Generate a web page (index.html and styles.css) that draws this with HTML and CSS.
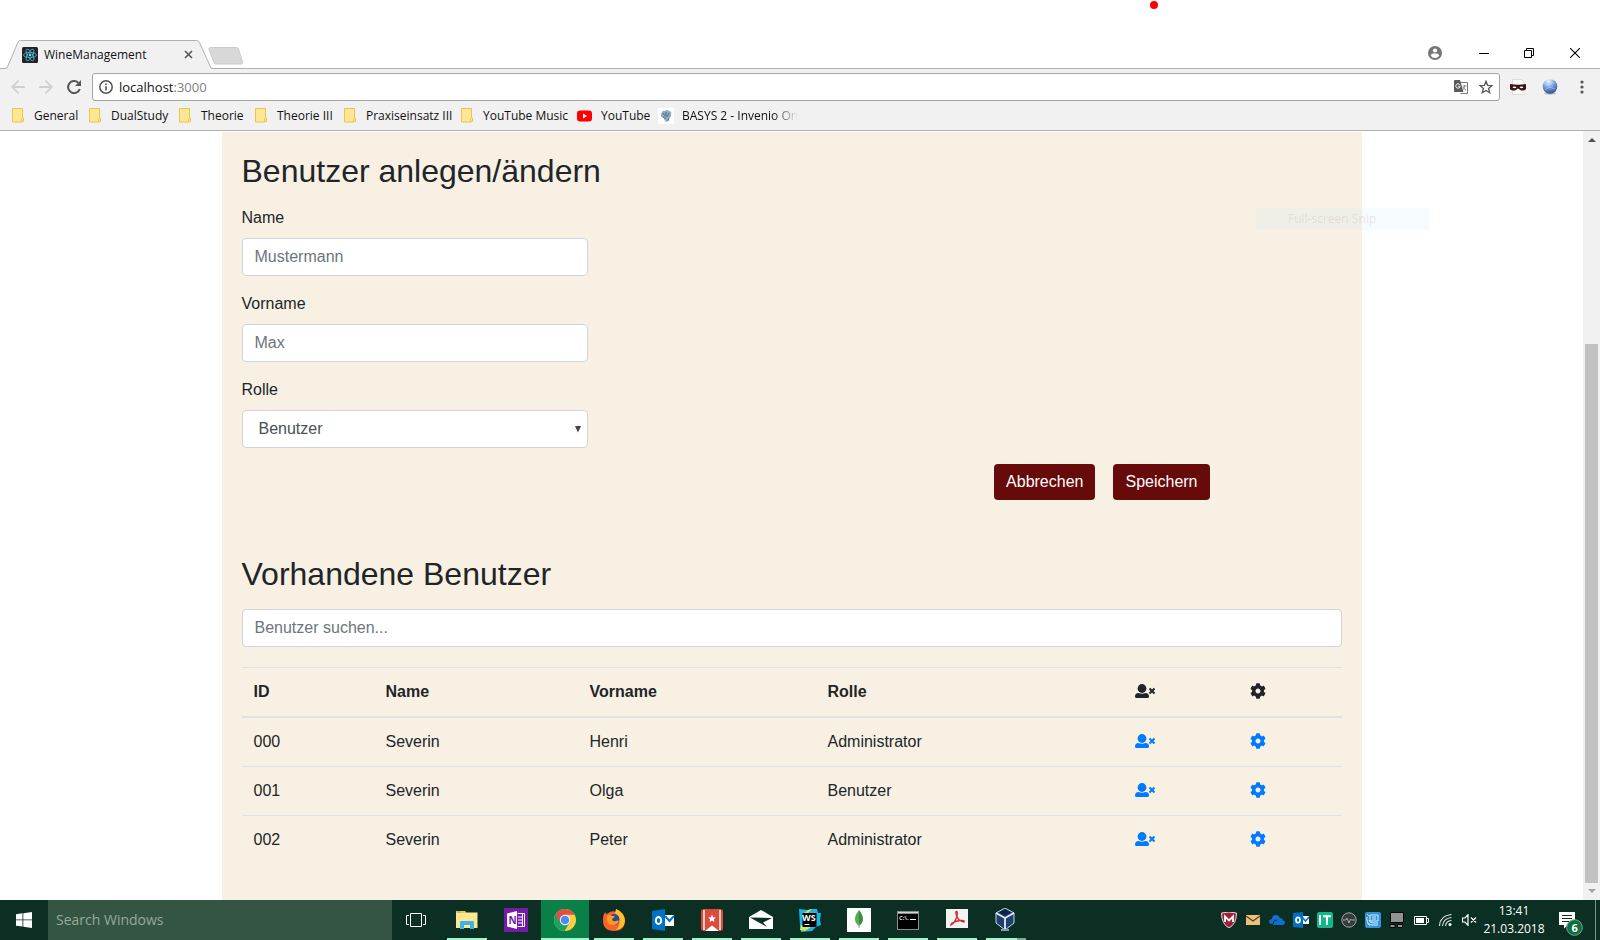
FILE: index.html
```html
<!DOCTYPE html>
<html lang="de">
<head>
<meta charset="utf-8">
<title>WineManagement</title>
<link rel="stylesheet" href="styles.css">
</head>
<body>
<svg class="defs" aria-hidden="true">
  <symbol id="folder" viewBox="0 0 13 15"><path d="M.5.5h10v9.500h1v3.500h-1v.5H.5z" fill="#ffe694" stroke="#eac54b"/><path d="M9.500 10.500v3" stroke="#eac54b"/></symbol>
  <symbol id="user-x" viewBox="0 0 20 14"><circle cx="7" cy="4.500" r="4.400" fill="currentColor"/><path d="M0 12.500Q0 9 3.500 9q3.500 1.500 7 0Q14 9 14 12.500q0 1.500-1.500 1.500h-11Q0 14 0 12.500z" fill="currentColor"/><path d="m14.500 4.500 5 5m0-5-5 5" stroke="currentColor" stroke-width="2"/></symbol>
  <symbol id="cog" viewBox="0 0 512 512"><path fill="currentColor" d="M444.788 291.1l42.616 24.599c4.867 2.809 7.126 8.618 5.459 13.985-11.07 35.642-29.97 67.842-54.689 94.586a12.016 12.016 0 0 1-14.832 2.254l-42.584-24.595a191.577 191.577 0 0 1-60.759 35.13v49.182a12.01 12.01 0 0 1-9.377 11.718c-34.956 7.85-72.499 8.256-109.219.007-5.49-1.233-9.403-6.096-9.403-11.723v-49.184a191.555 191.555 0 0 1-60.759-35.13l-42.584 24.595a12.016 12.016 0 0 1-14.832-2.254c-24.718-26.744-43.619-58.944-54.689-94.586-1.667-5.366.592-11.175 5.459-13.985L67.212 291.1a193.48 193.48 0 0 1 0-70.199l-42.616-24.599c-4.867-2.809-7.126-8.618-5.459-13.985 11.07-35.642 29.97-67.842 54.689-94.586a12.016 12.016 0 0 1 14.832-2.254l42.584 24.595a191.577 191.577 0 0 1 60.759-35.13V25.759a12.01 12.01 0 0 1 9.377-11.718c34.956-7.85 72.499-8.256 109.219-.007 5.49 1.233 9.403 6.096 9.403 11.723v49.184a191.555 191.555 0 0 1 60.759 35.13l42.584-24.595a12.016 12.016 0 0 1 14.832 2.254c24.718 26.744 43.619 58.944 54.689 94.586 1.667 5.366-.592 11.175-5.459 13.985L444.788 220.9a193.485 193.485 0 0 1 0 70.2zM336 256c0-44.112-35.888-80-80-80s-80 35.888-80 80 35.888 80 80 80 80-35.888 80-80z"/></symbol>
</svg>

<header class="browser">
  <div class="tabstrip">
    <div class="tab">
      <svg class="tab-shape" viewBox="0 0 208 29" width="208" height="29"><path d="M0 29 2 28 13 2Q14 .5 15.500.5h176q2 0 3 2L206 28l2 1z" fill="#f1f1f1"/><path d="M0 28.500 2 28 13 2Q14 .5 15.500.5h176q2 0 3 2L206 28l2 .5" fill="none" stroke="#b0b0b0"/></svg>
      <svg class="favicon" viewBox="0 0 16 16" width="16" height="16"><rect width="16" height="16" rx="1.500" fill="#222"/><g fill="none" stroke="#4db8d6" stroke-width=".8"><ellipse cx="8" cy="8" rx="6.500" ry="2.600"/><ellipse cx="8" cy="8" rx="6.500" ry="2.600" transform="rotate(60 8 8)"/><ellipse cx="8" cy="8" rx="6.500" ry="2.600" transform="rotate(120 8 8)"/></g><circle cx="8" cy="8" r="1.400" fill="#61dafb"/></svg>
      <span class="tab-title">WineManagement</span>
      <button class="plain" aria-label="Tab schließen"><svg viewBox="0 0 9 9" width="9" height="9"><path d="m1 1 7 7m0-7L1 8" stroke="#555" stroke-width="1.600"/></svg></button>
    </div>
    <button class="plain new-tab" aria-label="Neuer Tab"><svg viewBox="0 0 35 18" width="35" height="18"><path d="M2.500.5h26q1.500 0 2 1.500l4 13q.5 2-1 2H8q-1.500 0-2-1.500L1 2.500Q.5.500 2.500.5z" fill="#d8d8d8" stroke="#cacaca"/></svg></button>
    <div class="window-buttons">
      <button class="plain" aria-label="Profil"><svg viewBox="0 0 14 14" width="14" height="14"><circle cx="7" cy="7" r="7" fill="#757575"/><circle cx="7" cy="4.500" r="2.100" fill="#fff"/><path d="M2.800 9.700C3 7.500 5 7.500 7 7.500s4 0 4.200 2.200Q9.700 12 7 12T2.800 9.700z" fill="#fff"/></svg></button>
      <button class="plain" aria-label="Minimieren"><svg viewBox="0 0 10 10" width="10" height="10"><path d="M0 5.500h10" stroke="#000"/></svg></button>
      <button class="plain" aria-label="Verkleinern"><svg viewBox="0 0 10 10" width="10" height="10"><path d="M.5 2.500h7v7h-7zM2.500 2V.5h7v7H8" fill="none" stroke="#000"/></svg></button>
      <button class="plain" aria-label="Schließen"><svg viewBox="0 0 10 10" width="10" height="10"><path d="m0 0 10 10M10 0 0 10" stroke="#000" stroke-width="1.100"/></svg></button>
    </div>
  </div>
  <div class="toolbar">
    <div class="nav">
      <button class="plain" aria-label="Zurück"><svg viewBox="0 0 14 14" width="14" height="14"><path d="M14 7H1.500M7.500.7 1.200 7l6.300 6.300" fill="none" stroke="#d0d0d0" stroke-width="1.800"/></svg></button>
      <button class="plain" aria-label="Vorwärts"><svg viewBox="0 0 14 14" width="14" height="14"><path d="M0 7h12.500M6.500.7 12.800 7l-6.300 6.300" fill="none" stroke="#d0d0d0" stroke-width="1.800"/></svg></button>
      <button class="plain" aria-label="Neu laden"><svg viewBox="0 0 14 14" width="14" height="14"><path d="M12.800 9A6 6 0 1 1 11.300 2.800" fill="none" stroke="#555" stroke-width="2"/><path d="M14 0v6H8z" fill="#555"/></svg></button>
    </div>
    <div class="omnibox">
      <svg viewBox="0 0 14 14" width="14" height="14"><circle cx="7" cy="7" r="6.200" fill="none" stroke="#555" stroke-width="1.500"/><path d="M7 6.200v4.300M7 3.400V5" stroke="#555" stroke-width="1.600"/></svg>
      <a class="url" href="#">localhost<span class="port">:3000</span></a>
      <svg viewBox="0 0 14 14" width="14" height="14"><path d="M6 2.500h7.500v11H6.500" fill="#fff" stroke="#777"/><path d="M1 0h5l3.500 12H1q-1 0-1-1V1q0-1 1-1z" fill="#5a5a5a"/><path d="M5.800 4.700A2.200 2.200 0 1 0 6.200 6.300H4.300" fill="none" stroke="#fff"/><path d="M8.500 6h4M10.500 5v1c0 2-1 3-2 4m.5-3q1 2 3 3" fill="none" stroke="#888"/></svg>
      <svg class="star" viewBox="0 0 14 14" width="14" height="14"><path d="m7 1.300 1.600 4 4.400.3-3.400 2.800 1.100 4.300L7 10.400l-3.700 2.300 1.100-4.300L1 5.600l4.400-.3z" fill="none" stroke="#555" stroke-width="1.300"/></svg>
    </div>
    <div class="extensions">
      <button class="plain" aria-label="Maske"><svg viewBox="0 0 16 16" width="16" height="16"><path d="M2.500.5h9l2.500 2.500V15.500h-11.500z" fill="#fafafa" stroke="#ddd"/><path d="M0 5q8 1.500 16 0v5q-1 1.500-5 1.500L8 9.500 5 11.500Q1 11.500 0 10z" fill="#3c1216"/><ellipse cx="4.500" cy="8.300" rx="1.800" ry=".9" fill="#fff"/><ellipse cx="11.500" cy="8.300" rx="1.800" ry=".9" fill="#fff"/></svg></button>
      <button class="plain" aria-label="Globus"><svg viewBox="0 0 16 16" width="16" height="16"><defs><radialGradient id="globe" cx=".4" cy=".15" r=".9"><stop offset="0" stop-color="#eef5ff"/><stop offset=".4" stop-color="#88aee2"/><stop offset="1" stop-color="#1f4690"/></radialGradient></defs><ellipse cx="8" cy="14.500" rx="6" ry="1.200" fill="#bbb"/><circle cx="8" cy="7.500" r="7.300" fill="url(#globe)"/><path d="m2 4 4 3 5-4M3 11l4-3 6 2" fill="none" stroke="#d5e5ff" stroke-width=".4"/></svg></button>
      <button class="plain" aria-label="Menü"><svg viewBox="0 0 4 14" width="4" height="14"><g fill="#555"><circle cx="2" cy="2" r="1.600"/><circle cx="2" cy="7" r="1.600"/><circle cx="2" cy="12" r="1.600"/></g></svg></button>
    </div>
  </div>
  <nav class="bookmarks">
    <a href="#"><svg width="13" height="15"><use href="#folder"/></svg>General</a>
    <a href="#"><svg width="13" height="15"><use href="#folder"/></svg>DualStudy</a>
    <a href="#"><svg width="13" height="15"><use href="#folder"/></svg>Theorie</a>
    <a href="#"><svg width="13" height="15"><use href="#folder"/></svg>Theorie III</a>
    <a href="#"><svg width="13" height="15"><use href="#folder"/></svg>Praxiseinsatz III</a>
    <a href="#"><svg width="13" height="15"><use href="#folder"/></svg>YouTube Music</a>
    <a href="#"><svg viewBox="0 0 15 12" width="15" height="12"><rect y=".5" width="15" height="11" rx="3" fill="#f00"/><path d="m6 3.500 4 2.500-4 2.500z" fill="#fff"/></svg>YouTube</a>
    <a href="#" class="fade"><svg viewBox="0 0 16 16" width="16" height="16"><path d="M0 0h16v16H0z" fill="#fff"/><path d="M4 4q1-2 3-1 2-2 4 0 3 0 2 3 1 3-2 4-1 4-3 4-2-2-2-4-4-1-3-3 0-2 1-3z" fill="#8eacc4"/><path d="m5 5 2 3m1-4v5m3-4-2 4m-4 0 3 2m3-1-1 3" stroke="#4c6c88"/></svg>BASYS 2 - Invenio On</a>
  </nav>
</header>

<div class="viewport">
  <main class="card">
    <h2>Benutzer anlegen/ändern</h2>
    <form class="user-form">
      <div class="field"><label for="name">Name</label><input class="control" id="name" type="text" placeholder="Mustermann"></div>
      <div class="field"><label for="vorname">Vorname</label><input class="control" id="vorname" type="text" placeholder="Max"></div>
      <div class="field"><label for="rolle">Rolle</label>
        <div class="select-wrap"><select class="control" id="rolle"><option>Benutzer</option><option>Administrator</option></select><svg class="caret" viewBox="0 0 6 7" width="6" height="7"><path d="M0 0h6L3 6.500z" fill="#3f464c"/></svg></div>
      </div>
      <div class="actions"><button class="btn" type="reset">Abbrechen</button><button class="btn" type="button">Speichern</button></div>
    </form>
    <h2>Vorhandene Benutzer</h2>
    <input class="control" type="search" placeholder="Benutzer suchen..." aria-label="Benutzer suchen">
    <table class="users">
      <colgroup><col class="c-id"><col class="c-name"><col class="c-first"><col class="c-role"><col class="c-del"><col></colgroup>
      <thead><tr><th>ID</th><th>Name</th><th>Vorname</th><th>Rolle</th><th aria-label="Löschen"><svg width="20" height="14"><use href="#user-x"/></svg></th><th aria-label="Bearbeiten"><svg width="16" height="16"><use href="#cog"/></svg></th></tr></thead>
      <tbody>
        <tr><td>000</td><td>Severin</td><td>Henri</td><td>Administrator</td><td><a href="#" aria-label="Löschen"><svg width="20" height="14"><use href="#user-x"/></svg></a></td><td><a href="#" aria-label="Bearbeiten"><svg width="16" height="16"><use href="#cog"/></svg></a></td></tr>
        <tr><td>001</td><td>Severin</td><td>Olga</td><td>Benutzer</td><td><a href="#" aria-label="Löschen"><svg width="20" height="14"><use href="#user-x"/></svg></a></td><td><a href="#" aria-label="Bearbeiten"><svg width="16" height="16"><use href="#cog"/></svg></a></td></tr>
        <tr><td>002</td><td>Severin</td><td>Peter</td><td>Administrator</td><td><a href="#" aria-label="Löschen"><svg width="20" height="14"><use href="#user-x"/></svg></a></td><td><a href="#" aria-label="Bearbeiten"><svg width="16" height="16"><use href="#cog"/></svg></a></td></tr>
      </tbody>
    </table>
  </main>
  <div class="scrollbar">
    <svg viewBox="0 0 8 4" width="8" height="4"><path d="M0 4h8L4 0z" fill="#505050"/></svg>
    <div class="track"><div class="thumb"></div></div>
    <svg viewBox="0 0 8 4" width="8" height="4"><path d="M0 0h8L4 4z" fill="#a3a3a3"/></svg>
  </div>
</div>

<footer class="taskbar">
  <button class="plain start" aria-label="Start"><svg viewBox="0 0 16 16" width="16" height="16"><path d="M0 2.200 6.500 1.300v6.200H0zM7.300 1.200 16 0v7.500H7.300zM0 8.300h6.500v6.300L0 13.700zM7.300 8.300H16V16l-8.700-1.200z" fill="#fff"/></svg></button>
  <input class="search" type="text" placeholder="Search Windows" aria-label="Search Windows">
  <div class="apps">
    <button class="plain app task-view" aria-label="Taskansicht"><svg viewBox="0 0 20 14" width="20" height="14"><path d="M4.500.5h11v13h-11zM3 2.500H.5v9H3M17 2.500h2.500v9H17" fill="none" stroke="#fff"/></svg></button>
    <button class="plain app open" aria-label="Explorer"><svg viewBox="0 0 22 18" width="22" height="18"><path d="M0 1q0-1 1-1h8l1 1.500h11.500V17H0z" fill="#ffe694"/><path d="M1 0h8l1 2H0z" fill="#f9c440"/><path d="M2 1h2" stroke="#3cb4e7"/><path d="M4 18v-7q0-1 1-1h12q1 0 1 1v7h-4v-4H8v4z" fill="#3cb4e7"/></svg></button>
    <button class="plain app" aria-label="OneNote"><svg viewBox="0 0 24 24" width="24" height="24"><path d="M0 0h24v24H0z" fill="#7719aa"/><path d="M3 5.500 13 3v18L3 18.500z" fill="#fff"/><path d="M13.500 5.500h7v13h-7M14 9h5M14 12h5M14 15h5M18.500 6v12" fill="none" stroke="#fff"/><text x="4.500" y="16" font-size="10" class="glyph" fill="#7719aa">N</text></svg></button>
    <button class="plain app open active" aria-label="Chrome"><svg viewBox="0 0 22 22" width="22" height="22"><circle cx="11" cy="11" r="11" fill="#ffcd41"/><path d="M11 11 1.500 5.500A11 11 0 0 0 10.500 22L16 13z" fill="#1da262"/><path d="M11 11V5.800h9.700A11 11 0 0 0 1.500 5.500L6.300 13.500z" fill="#dd5144"/><circle cx="11" cy="11" r="5.200" fill="#fff"/><circle cx="11" cy="11" r="4.300" fill="#4c8bf5"/></svg></button>
    <button class="plain app open" aria-label="Firefox"><svg viewBox="0 0 22 22" width="22" height="22"><path d="M2 3q1 2 2 2Q8 1 13 3V0q8 3 9 11 0 11-11 11T0 11q0-5 2-8z" fill="#f9622d"/><path d="M13 0q9 4 9 12-1 8-9 9 5-5 3-11-1-4-4-6z" fill="#ffbe2e"/><circle cx="11" cy="10.500" r="5.500" fill="#274b9c"/><path d="M4 7q3-2 5 0h3q-1 2-3 3 0 3 4 2 2-1 3 0-2 4-6 4-5 0-6-5z" fill="#ff9b21"/></svg></button>
    <button class="plain app open" aria-label="Outlook"><svg viewBox="0 0 22 22" width="22" height="22"><path d="M13 6h9v11h-9z" fill="#fff"/><path d="m13 7 4.500 5L22 7" fill="none" stroke="#0072c6" stroke-width="2"/><path d="M0 2 13 0v22L0 20z" fill="#0072c6"/><ellipse cx="6.500" cy="11.500" rx="2.700" ry="3.500" fill="none" stroke="#fff" stroke-width="2"/></svg></button>
    <button class="plain app open" aria-label="Wunderlist"><svg viewBox="0 0 22 22" width="22" height="22"><rect width="22" height="22" rx="3" fill="#db4c3f"/><path d="M3 1v20m16-20v20" stroke="#fff" stroke-width="1.400"/><path d="M4 22h14l-7-5.500z" fill="#fff"/><path d="m11 5.500 1.100 2.700 2.900.2-2.200 1.900.7 2.800-2.500-1.500-2.500 1.500.7-2.800L7 8.400l2.900-.2z" fill="#fff"/></svg></button>
    <button class="plain app open" aria-label="Mail"><svg viewBox="0 0 24 20" width="24" height="20"><path d="M0 7 12 0l12 7v12H0z" fill="#fff"/><path d="m1 7.500 22 .5-9 4.500 4 4.500L9 12z" fill="#0b2f22"/></svg></button>
    <button class="plain app open" aria-label="WebStorm"><svg viewBox="0 0 24 24" width="24" height="24"><path d="m1 1 9 1 3-1 6 0 1 4 3 0-1 7 1 5-5 2-4 4-11 1-1-6z" fill="#1cb5e4"/><path d="m10 2 4-1-5 5-4 0zM3 17l-1 5 5 1 6-4z" fill="#d7e84e"/><path d="M4.500 5h14v14h-14z" fill="#000"/><text x="4" y="13" font-size="9" class="glyph" fill="#fff">WS</text><path d="M6.500 16.500h5" stroke="#fff"/></svg></button>
    <button class="plain app open" aria-label="MongoDB"><svg viewBox="0 0 24 24" width="24" height="24"><path d="M0 0h24v24H0z" fill="#fff"/><path d="M12 2Q8 7 8 11t4 7z" fill="#50ad4d"/><path d="M12 2q4 5 4 9t-4 7z" fill="#3b8d3c"/><path d="M12 15v5" stroke="#999"/></svg></button>
    <button class="plain app open" aria-label="Eingabeaufforderung"><svg viewBox="0 0 22 19" width="22" height="19"><path d="M0 0h22v19H0z" fill="#8c8c8c"/><path d="M1 3h20v15H1z" fill="#000"/><path d="M1 1.500h20" stroke="#d5d5d5"/><text x="2" y="9" font-size="6" class="glyph" fill="#ddd">C:\.</text><path d="M13 8.500h6" stroke="#fff"/></svg></button>
    <button class="plain app open" aria-label="Acrobat"><svg class="raised" viewBox="0 0 22 19" width="22" height="19"><path d="M0 0h22v19H0z" fill="#f3f3f3"/><path d="M5 16q4-2 6-9 1-5-1-4.500-1 1 1.500 6 2 4 6.500 4.500 1-2-4-1.500-5 .5-8.500 3z" fill="none" stroke="#d8232a" stroke-width="1.300"/></svg></button>
    <button class="plain app open grouped" aria-label="VirtualBox"><svg viewBox="0 0 20 24" width="20" height="24"><path d="m1 5 9-5 9 5v10l-9 7-9-7z" fill="#1f3f70" stroke="#c9d6e6"/><path d="m1 5 9 5 9-5M10 10v12" fill="none" stroke="#e2ebf5" stroke-width="1.800"/><path d="m4 4.500 6-3.500 6 3.500-6 3z" fill="#0e2444"/><path d="M6 22h8" stroke="#8199ba" stroke-width="2"/></svg></button>
  </div>
  <div class="tray">
    <span><svg viewBox="0 0 16 16" width="16" height="16"><path d="M.5 1 8 0l7.500 1q0 11-7.500 15Q.5 12 .5 1z" fill="#a61d36" stroke="#ddd"/><path d="M4 10V4.500l4 4 4-4V10" fill="none" stroke="#fff" stroke-width="1.800"/></svg></span>
    <span><svg viewBox="0 0 14 10" width="14" height="10"><path d="M0 0h14v10H0z" fill="#efc07b"/><path d="m0 1 7 5 7-5" fill="none" stroke="#4b4128" stroke-width="1.300"/></svg></span>
    <span><svg viewBox="0 0 16 10" width="16" height="10"><path d="M3 9Q0 9 0 6.500T3 4q0-4 4-4 3 0 4 3 3 0 3 2.500 2 0 2 2T14 10H5z" fill="#0f6fce"/><path d="M4 9q0-4 4-4" fill="none" stroke="#0b2f22"/></svg></span>
    <span><svg viewBox="0 0 16 16" width="16" height="16"><path d="M9 4h7v8H9z" fill="#fff"/><path d="m9 5 3.500 4L16 5" fill="none" stroke="#0072c6" stroke-width="1.500"/><path d="M0 1 10 0v16L0 15z" fill="#0072c6"/><ellipse cx="5" cy="8" rx="2" ry="2.700" fill="none" stroke="#fff" stroke-width="1.700"/></svg></span>
    <span><svg viewBox="0 0 16 16" width="16" height="16"><rect width="16" height="16" rx="2" fill="#14b789"/><path d="M3 3v10M6 4.200h8M10 4v9" stroke="#fff" stroke-width="2"/></svg></span>
    <span><svg viewBox="0 0 16 16" width="16" height="16"><circle cx="8" cy="8" r="7.200" fill="#333d3b" stroke="#a6aaa9"/><path d="M2 8h3l1-2 2 5 1.500-4 1 1H14" fill="none" stroke="#a6aaa9"/></svg></span>
    <span><svg viewBox="0 0 16 16" width="16" height="16"><rect width="16" height="16" rx="2" fill="#2f93dc"/><path d="M5 3h8v6H5zM7 5h4M7 7h4M2 5q-1 6 4 8h7M4 8q1 3 4 3h5" fill="none" stroke="#d7effc"/><path d="m2 2 3 3M2 11l3 3" stroke="#e9cd63"/></svg></span>
    <span><svg viewBox="0 0 16 16" width="16" height="16"><path d="M1.500.5h13v10h-13zM1 12.500h5v3H1zM8.500 12.500h5v3h-5z" fill="#929292" stroke="#080808"/></svg></span>
    <span><svg viewBox="0 0 15 9" width="15" height="9"><path d="M.5.5h12v8H.500zM13 2.500h1.500v4H13" fill="none" stroke="#fff"/><path d="M2 2h8v5H2z" fill="#fff"/></svg></span>
    <span><svg viewBox="0 0 13 12" width="13" height="12"><g fill="none" stroke="#dce3e0" stroke-width="1.100"><path d="M.5 12Q1 1.500 12.500.5M3.500 12q.5-7.500 9-8.500M6.500 12q.5-5 6-5.500"/></g><circle cx="11" cy="10.500" r="1.500" fill="#fff"/></svg></span>
    <span><svg viewBox="0 0 15 12" width="15" height="12"><path d="M.5 4H3L6 .7v10.600L3 8H.5zM9 3.500l5 5m0-5-5 5" fill="none" stroke="#fff" stroke-width="1.200"/></svg></span>
  </div>
  <div class="clock"><time>13:41</time><time>21.03.2018</time></div>
  <button class="plain notices" aria-label="Benachrichtigungen"><svg viewBox="0 0 24 24" width="24" height="24"><path d="M0 0h16v13H9l-4 3.500V13H0z" fill="#fff"/><path d="M3 3.500h10M3 6.500h10M3 9.500h7" stroke="#0b2f22"/><circle cx="15.500" cy="15.500" r="7.800" fill="#0a7040" stroke="#7aa893"/><text x="12.500" y="20" font-size="11" class="glyph" fill="#fff">6</text></svg></button>
  <div class="show-desktop"></div>
</footer>

<div class="ghost-menu">Full-screen Snip</div>
<div class="record-dot"></div>
</body>
</html>
```
FILE: styles.css
```css
* { box-sizing: border-box; }

body {
  margin: 0;
  min-height: 100vh;
  display: flex;
  flex-direction: column;
  position: relative;
  background: #fff;
  color: #212529;
  font: 16px/24px "Liberation Sans", Arial, sans-serif;
}

svg { display: block; flex: none; }
.defs { position: absolute; width: 0; height: 0; }
.plain { border: 0; background: none; padding: 0; display: flex; align-items: center; justify-content: center; }
.glyph { font-family: "Open Sans", sans-serif; font-weight: 700; }

/* Browser frame */
.browser { background: #f1f1f1; border-bottom: 1px solid #b0b0b0; font: 12px/16px "Open Sans", "Noto Sans", sans-serif; color: #111; }
.tabstrip { height: 69px; background: #fff; border-bottom: 1px solid #b0b0b0; display: flex; align-items: flex-end; padding-left: 5px; }
.tab { position: relative; width: 203px; height: 29px; margin-bottom: -1px; display: flex; align-items: center; padding: 0 15px 0 17px; }
.tab-shape { position: absolute; left: 0; top: 0; }
.favicon, .tab-title, .tab button { position: relative; }
.tab-title { flex: 1; padding-left: 6px; }
.new-tab { margin-bottom: 3px; }
.window-buttons { margin-left: auto; display: flex; height: 29px; align-items: center; padding: 0 2px 1px 0; }
.window-buttons button { width: 46px; }
.window-buttons button:nth-child(2) { width: 44px; }
.window-buttons button:first-child { width: 54px; }

.toolbar { display: flex; align-items: center; padding-top: 4px; }
.nav { display: flex; width: 92px; padding-left: 4px; }
.nav button { width: 28px; }
.omnibox { flex: 1; height: 28px; display: flex; align-items: center; padding: 0 6px; background: #fff; border: 1px solid #a5a5a5; border-radius: 3px; }
.url { flex: 1; margin-left: 6px; font-size: 13px; color: #111; text-decoration: none; }
.port { color: #808080; }
.star { margin-left: 11px; }
.extensions { display: flex; width: 100px; padding-left: 2px; }
.extensions button { width: 32px; }

.bookmarks { display: grid; grid-template-columns: 77px 90px 76px 89px 117px 116px 81px auto; justify-content: start; height: 29px; align-items: center; padding-left: 12px; }
.bookmarks a { display: flex; align-items: center; color: #111; text-decoration: none; white-space: nowrap; }
.bookmarks svg { margin-right: 9px; }
.bookmarks .fade svg { margin-right: 8px; }
.fade { -webkit-mask-image: linear-gradient(to right, #000 82%, transparent 100%); mask-image: linear-gradient(to right, #000 82%, transparent 100%); }

/* Page */
.viewport { flex: 1; display: flex; }
.card { width: 100%; max-width: 1140px; margin: 1px auto 0; padding: 20px; background: #f8f1e3; }
h2 { margin: 0 0 16px; font-size: 32px; line-height: 38px; font-weight: 400; }
.field { width: 346px; max-width: 100%; margin-bottom: 16px; }
.field label { display: block; margin-bottom: 8px; }
.control { display: block; width: 100%; height: 38px; padding: 6px 12px; border: 1px solid #ced4da; border-radius: 4px; background: #fff; color: #495057; font: inherit; appearance: none; }
.control::placeholder { color: #6c757d; opacity: 1; }
.select-wrap { position: relative; }
select.control { padding-left: 16px; }
.caret { position: absolute; right: 7px; top: 16px; pointer-events: none; }
.actions { display: flex; justify-content: flex-end; gap: 18px; padding-right: 132px; margin-bottom: 55px; }
.btn { padding: 6px 12px; border: 0; border-radius: 4px; background: #660a0a; color: #fff; font: inherit; }

.users { width: 100%; margin-top: 20px; table-layout: fixed; border-spacing: 0; text-align: left; }
.users th, .users td { padding: 12px; height: 49px; border-top: 1px solid #dee2e6; vertical-align: middle; }
.users th { border-bottom: 2px solid #dee2e6; height: 51px; }
.users tbody tr:first-child td { border-top: 0; height: 48px; }
.users a { color: #007bff; display: flex; }
.users svg { margin-bottom: 2px; }
.c-id { width: 132px; }
.c-name { width: 204px; }
.c-first { width: 238px; }
.c-role { width: 307px; }
.c-del { width: 115px; }

.scrollbar { width: 17px; background: #f1f1f1; display: flex; flex-direction: column; align-items: center; padding: 7px 0; gap: 6px; }
.track { flex: 1; width: 13px; display: flex; flex-direction: column; }
.track::before { content: ""; flex: 4; }
.thumb { flex: 11; background: #c1c1c1; }

/* Taskbar */
.taskbar { height: 40px; background: #0b2f22; display: flex; color: #fff; font: 12px/18px "Open Sans", "Noto Sans", sans-serif; }
.start { width: 48px; }
.search { width: 344px; border: 0; padding: 0 8px; background: #345543; color: #fff; font: 14px/20px "Open Sans", "Noto Sans", sans-serif; }
.search::placeholder { color: #94aa9d; opacity: 1; }
.apps { display: flex; gap: 1px; }
.app { width: 48px; position: relative; }
.task-view { margin-right: 2px; }
.open::after { content: ""; position: absolute; left: 4px; right: 4px; bottom: 0; height: 2px; background: #a5f3cd; }
.active { background: #0a8049; }
.active::after { left: 0; right: 0; }
.grouped { padding-right: 3px; }
.grouped::after { background: linear-gradient(to right, #a5f3cd 31px, #7aa893 31px); }
.raised { margin-bottom: 3px; }
.tray { margin-left: auto; display: flex; }
.tray span { width: 24px; display: flex; align-items: center; justify-content: center; }
.clock { width: 66px; display: flex; flex-direction: column; align-items: center; justify-content: center; }
.notices { width: 48px; padding-top: 8px; }
.show-desktop { width: 5px; border-left: 1px solid #7e938b; }

/* Overlays */
.ghost-menu { position: absolute; left: 1256px; top: 208px; width: 173px; height: 22px; padding-left: 32px; background: rgba(205, 235, 250, 0.2); color: rgba(190, 130, 120, 0.2); font: 12px/22px "Open Sans", "Noto Sans", sans-serif; }
.record-dot { position: absolute; left: 1150px; top: 1px; width: 8px; height: 8px; border-radius: 50%; background: #f00; }
```
